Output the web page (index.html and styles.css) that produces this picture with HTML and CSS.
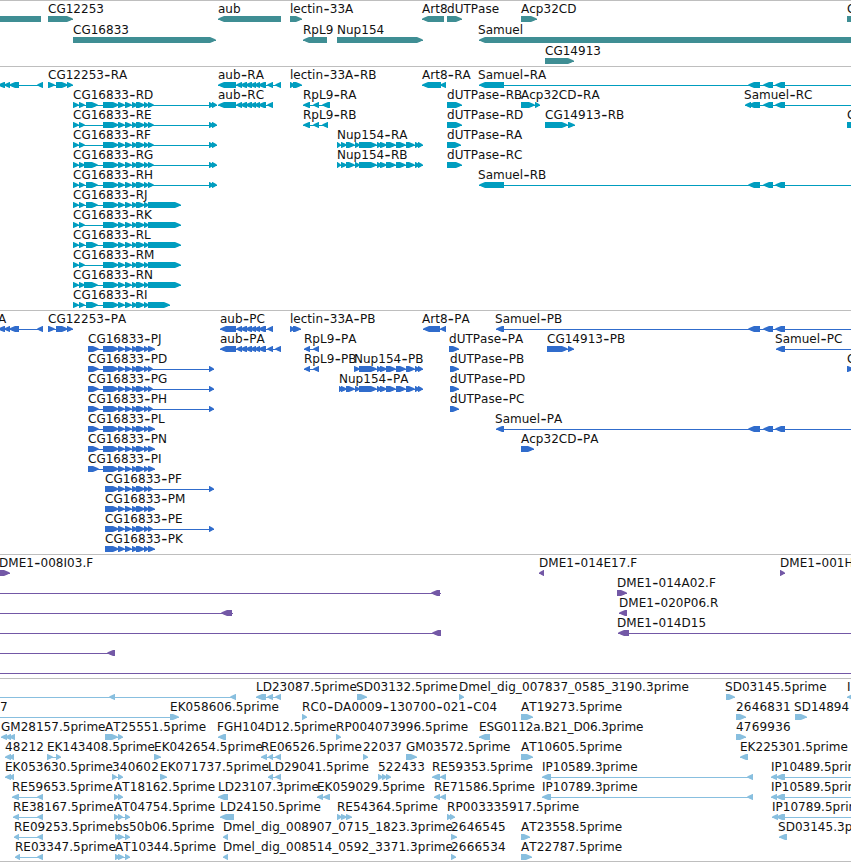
FILE: index.html
```html
<!DOCTYPE html>
<html lang="en">
<head>
<meta charset="utf-8">
<title>Genome tracks</title>
<link rel="stylesheet" href="styles.css">
</head>
<body>
<main class="browser"></main>
<script src="tracks.js"></script>
</body>
</html>
```
FILE: styles.css
```css
body {
  margin: 0;
  background: #fff;
  overflow: hidden;
}

.browser {
  display: flex;
  flex-direction: column;
  width: 851px;
  border-bottom: 1px solid #bebebe;
}

.track {
  border-top: 1px solid #bebebe;
}

.track svg {
  display: block;
  overflow: hidden;
}

.track text {
  font: 12px "DejaVu Sans", sans-serif;
  font-kerning: none;
  fill: #111;
}

.track .dash {
  font-size: 17px;
}

.gene { fill: #3f8e94; }
.transcript { fill: #009dbf; }
.protein { fill: #306ccc; }
.bac { fill: #7358a6; }
.est { fill: #88bfdf; }
```
FILE: tracks.js
```js
// Feature: [row, label, label x, direction, exons, line start, line end]
const core = "103-119 118-125 125-132 132-138 136-145 144-149 ";
const lead = "73-79 79-85 ";
const tail = core + "148-154 209-214 212-217";
const nup = "337-341 341-347 346-355 355-360 359-377 377-382 380-387 386-396 396-406 406-415 415-420 418-423";
const aub = "218-236 236-242 240-247 245-252 250-256 254-260 258-266 267-273";
const aubP = "220-236" + aub.slice(7);

const tracks = [
  { cls: "gene", height: 66, pitch: 21, items: [
    [0, "", 0, ">", "-20-41#"],
    [0, "CG12253", 48, ">", "48-73"],
    [0, "aub", 218, "<", "218-281"],
    [0, "lectin-33A", 290, ">", "290-302"],
    [0, "Art8", 422, "<", "422-444"],
    [0, "dUTPase", 447, ">", "447-462"],
    [0, "Acp32CD", 521, ">", "521-537"],
    [0, "C", 847, ">", "847-870"],
    [1, "CG16833", 73, ">", "73-216"],
    [1, "RpL9", 303, "<", "303-327"],
    [1, "Nup154", 337, ">", "337-423"],
    [1, "Samuel", 478, "<", "479-870"],
    [2, "CG14913", 545, ">", "545-574"]
  ]},
  { cls: "transcript", height: 244, pitch: 20, items: [
    [0, "", 0, "<", "-2-5 4-10 9-19 37-43"],
    [0, "CG12253-RA", 48, ">", "48-55 56-68 67-73"],
    [0, "aub-RA", 218, "<", aub + " 275-281"],
    [0, "lectin-33A-RB", 290, ">", "290-295 293-302"],
    [0, "Art8-RA", 422, "<", "422-441 440-446"],
    [0, "Samuel-RA", 478, "<", "479-504 748-760 763-773 775-785", 479, 851],
    [1, "CG16833-RD", 73, ">", lead + "86-98 " + tail],
    [1, "aub-RC", 218, "<", aub],
    [1, "RpL9-RA", 303, "<", "303-310 313-319 322-330"],
    [1, "dUTPase-RB", 447, ">", "447-462"],
    [1, "Acp32CD-RA", 521, ">", "521-535 535-540"],
    [1, "Samuel-RC", 744, "<", "745-751 748-760 763-773 775-785", 745, 851],
    [2, "CG16833-RE", 73, ">", lead + tail],
    [2, "RpL9-RB", 303, "<", "303-310 313-319 322-328"],
    [2, "dUTPase-RD", 447, ">", "447-462"],
    [2, "CG14913-RB", 545, ">", "545-568 568-575"],
    [2, "C", 847, ">", "847-870"],
    [3, "CG16833-RF", 73, ">", lead + tail],
    [3, "Nup154-RA", 337, ">", nup],
    [3, "dUTPase-RA", 447, ">", "447-461"],
    [4, "CG16833-RG", 73, ">", lead + "84-98 " + tail],
    [4, "Nup154-RB", 337, ">", nup],
    [4, "dUTPase-RC", 447, ">", "447-462"],
    [5, "CG16833-RH", 73, ">", lead + "86-98 " + tail],
    [5, "Samuel-RB", 478, "<", "479-504 748-760 763-773 775-785", 479, 851],
    [6, "CG16833-RJ", 73, ">", lead + "86-98 " + core + "148-181"],
    [7, "CG16833-RK", 73, ">", lead + core + "148-181"],
    [8, "CG16833-RL", 73, ">", lead + "86-98 " + core + "148-181"],
    [9, "CG16833-RM", 73, ">", lead + core + "148-181"],
    [10, "CG16833-RN", 73, ">", lead + "84-98 " + core + "148-181"],
    [11, "CG16833-RI", 73, ">", lead + "86-98 " + core + "148-170"]
  ]},
  { cls: "protein", height: 244, pitch: 20, items: [
    [0, "A", -2, "<", "-2-5 4-10 9-19 37-43"],
    [0, "CG12253-PA", 48, ">", "48-55 56-68 67-73"],
    [0, "aub-PC", 220, "<", aubP],
    [0, "lectin-33A-PB", 290, ">", "290-295 293-301"],
    [0, "Art8-PA", 422, "<", "423-440 440-446"],
    [0, "Samuel-PB", 495, "<", "496-504 748-760 763-773 775-785", 496, 851],
    [1, "CG16833-PJ", 88, ">", "88-99 " + core + "148-155"],
    [1, "aub-PA", 220, "<", aubP + " 275-281"],
    [1, "RpL9-PA", 304, "<", "304-310 313-319"],
    [1, "dUTPase-PA", 449, ">", "449-459"],
    [1, "CG14913-PB", 547, ">", "547-568 568-574"],
    [1, "Samuel-PC", 775, "<", "776-785", 776, 851],
    [2, "CG16833-PD", 88, ">", "88-99 " + core + "148-153 209-214"],
    [2, "RpL9-PB", 304, "<", "304-310 313-319"],
    [2, "Nup154-PB", 354, ">", "354" + nup.slice(nup.indexOf("355-360") + 3)],
    [2, "dUTPase-PB", 450, ">", "450-459"],
    [2, "C", 847, ">", "847-854"],
    [3, "CG16833-PG", 88, ">", "88-99 " + core + "148-153 209-214"],
    [3, "Nup154-PA", 339, ">", "339-343" + nup.slice(7)],
    [3, "dUTPase-PD", 450, ">", "450-459"],
    [4, "CG16833-PH", 88, ">", "88-99 " + core + "148-153 209-214"],
    [4, "dUTPase-PC", 450, ">", "450-459"],
    [5, "CG16833-PL", 88, ">", "88-99 " + core + "148-155"],
    [5, "Samuel-PA", 495, "<", "496-504 748-760 763-773 775-785", 496, 851],
    [6, "CG16833-PN", 88, ">", "88-99 " + core + "148-155"],
    [6, "Acp32CD-PA", 521, ">", "521-534"],
    [7, "CG16833-PI", 88, ">", "88-99 " + core + "148-155"],
    [8, "CG16833-PF", 105, ">", "105" + core.slice(3) + "148-153 209-214"],
    [9, "CG16833-PM", 105, ">", "105" + core.slice(3) + "148-155"],
    [10, "CG16833-PE", 105, ">", "105" + core.slice(3) + "148-153 209-214"],
    [11, "CG16833-PK", 105, ">", "105" + core.slice(3) + "148-155"]
  ]},
  { cls: "bac", height: 124, pitch: 20, items: [
    [0, "DME1-008I03.F", -1, ">", "-2-10"],
    [0, "DME1-014E17.F", 539, "<", "539-544"],
    [0, "DME1-001H", 780, ">", "780-785"],
    [1, "", 0, "<", "431-440", 0, 441],
    [1, "DME1-014A02.F", 617, ">", "617-627"],
    [2, "", 0, "<", "221-232", 0, 233],
    [2, "DME1-020P06.R", 619, "<", "619-627"],
    [3, "", 0, "<", "432-441", 0, 441],
    [3, "DME1-014D15", 617, "<", "618-629", 618, 851],
    [4, "", 0, "<", "107-115", 0, 115],
    [5, "", 0, "<", "", 0, 851]
  ]},
  { cls: "est", height: 183, pitch: 20, items: [
    [0, "", 0, "<", "109-115 230-236", 0, 236],
    [0, "LD23087.5prime", 256, "<", "256-266 267-273 275-281"],
    [0, "SD03132.5prime", 356, ">", "357-367"],
    [0, "Dmel_dig_007837_0585_3190.3prime", 459, ">", "459-464"],
    [0, "SD03145.5prime", 725, ">", "726-735"],
    [0, "I", 847, "<", "847-858"],
    [1, "7", 0, ">", "170-179", 0, 179],
    [1, "EK058606.5prime", 170, ">", ""],
    [1, "RC0-DA0009-130700-021-C04", 302, ">", "302-307"],
    [1, "AT19273.5prime", 521, ">", "521-533"],
    [1, "2646831", 736, ">", "736-746"],
    [1, "SD14894", 794, ">", "795-807"],
    [2, "GM28157.5prime", 1, "<", "1-7 5-11 9-15"],
    [2, "AT25551.5prime", 105, ">", "105-118 118-123"],
    [2, "FGH104D12.5prime", 217, "<", "218-226"],
    [2, "RP004073996.5prime", 336, ">", "336-341"],
    [2, "ESG0112a.B21_D06.3prime", 479, "<", "479-490"],
    [2, "4769936", 736, ">", "736-746"],
    [3, "48212", 5, "<", "5-11 9-14"],
    [3, "EK143408.5prime", 47, ">", "47-53 56-61"],
    [3, "EK042654.5prime", 154, ">", "154-161"],
    [3, "RE06526.5prime", 261, "<", "261-267 268-273 275-281"],
    [3, "22037", 363, ">", "363-368"],
    [3, "GM03572.5prime", 406, ">", "406-417"],
    [3, "AT10605.5prime", 521, ">", "521-533"],
    [3, "EK225301.5prime", 740, "<", "740-748"],
    [4, "EK053630.5prime", 5, "<", "5-11 9-14"],
    [4, "340602", 112, ">", "112-117 118-123"],
    [4, "EK071737.5prime", 160, ">", "160-167"],
    [4, "LD29041.5prime", 268, "<", "268-273 275-281"],
    [4, "522433", 378, ">", "378-383 382-387 386-391"],
    [4, "RE59353.5prime", 432, "<", "432-440 440-446"],
    [4, "IP10589.3prime", 542, "<", "542-551 747-753"],
    [4, "IP10489.5prime", 771, "<", "771-777 776-785", 771, 851],
    [5, "RE59653.5prime", 12, "<", "12-19 37-43"],
    [5, "AT18162.5prime", 114, ">", "114-119 118-123"],
    [5, "LD23107.3prime", 218, "<", "218-228"],
    [5, "EK059029.5prime", 317, "<", "317-323 323-330"],
    [5, "RE71586.5prime", 434, "<", "434-440 440-446"],
    [5, "IP10789.3prime", 542, "<", "542-551 747-753"],
    [5, "IP10589.5prime", 771, "<", "771-777 776-785", 771, 851],
    [6, "RE38167.5prime", 13, "<", "13-19 37-43"],
    [6, "AT04754.5prime", 114, ">", "114-119 118-123 125-130"],
    [6, "LD24150.5prime", 220, "<", "220-234"],
    [6, "RE54364.5prime", 337, ">", "337-342 341-347 346-352"],
    [6, "RP003335917.5prime", 447, ">", "447-452 450-455"],
    [6, "IP10789.5prime", 772, "<", "772-778 776-785", 772, 851],
    [7, "RE09253.5prime", 14, "<", "14-19 37-43"],
    [7, "bs50b06.5prime", 115, ">", "115-120 118-124 125-130"],
    [7, "Dmel_dig_008907_0715_1823.3prime", 223, "<", "223-228"],
    [7, "2646545", 451, ">", "451-457"],
    [7, "AT23558.5prime", 521, ">", "521-530"],
    [7, "SD03145.3prime", 778, "<", "779-787"],
    [8, "RE03347.5prime", 15, "<", "15-20 37-43"],
    [8, "AT10344.5prime", 115, ">", "115-120 118-124 125-130"],
    [8, "Dmel_dig_008514_0592_3371.3prime", 223, "<", "223-228"],
    [8, "2666534", 451, ">", "451-456"],
    [8, "AT22787.5prime", 521, ">", "521-532"]
  ]}
];

const NS = "http://www.w3.org/2000/svg";
function add(parent, name, attrs) {
  const el = document.createElementNS(NS, name);
  for (const key in attrs) el.setAttribute(key, attrs[key]);
  parent.appendChild(el);
  return el;
}

// Block with an arrow tip at its leading end
function exonPath(a, b, top, dir, blunt) {
  const bottom = top + 6, mid = top + 3;
  if (blunt) return `M${a} ${top}H${b}V${bottom}H${a}Z`;
  const tip = Math.min(6, b - a - 0.5), sign = dir === ">" ? 1 : -1;
  const head = dir === ">" ? b : a, back = dir === ">" ? a : b;
  const neck = head - sign * tip, curve = head - sign * tip * 0.4;
  return `M${back} ${top}H${neck}L${curve} ${mid - 1.5}L${head} ${mid - 0.3}V${mid + 0.3}L${curve} ${mid + 1.5}L${neck} ${bottom}H${back}Z`;
}

// Letter spacing per family of label
function spacing(label) {
  if (/^RC0/.test(label)) return 0.16;
  if (/^ESG/.test(label)) return -0.1;
  if (/^(AT|RP|bs|EK04|EK07|EK05860|Dmel)/.test(label)) return 0.08;
  if (/^\d{5,7}$/.test(label)) return 0.2;
  return 0.02;
}

function addLabel(svg, label, x, y) {
  const text = add(svg, "text", { x, y, "letter-spacing": spacing(label) });
  const pieces = label.split("-");
  pieces.forEach((piece, i) => {
    if (i) add(text, "tspan", { class: "dash", dx: 0.3, dy: 1 }).textContent = "-";
    add(text, "tspan", i ? { dx: 0.2, dy: -1 } : {}).textContent = piece;
  });
}

for (const track of tracks) {
  const section = document.createElement("section");
  section.className = "track";
  const svg = add(section, "svg", { width: 851, height: track.height - 1 });
  for (const [row, label, x, dir, exons, from, to] of track.items) {
    const top = 15 + row * track.pitch;
    const parts = (exons.match(/-?\d+-\d+#?/g) || []).map(s => {
      const m = s.match(/^(-?\d+)-(\d+)(#?)$/);
      return [+m[1], +m[2], m[3]];
    });
    const start = from !== undefined ? from : parts.length ? parts[0][0] : 0;
    const end = to !== undefined ? to : parts.length ? parts[parts.length - 1][1] : 0;
    if (end > start) add(svg, "rect", { class: track.cls, x: start, y: top + 3, width: end - start, height: 1 });
    for (const [a, b, blunt] of parts) add(svg, "path", { class: track.cls, d: exonPath(a, b, top, dir, blunt) });
    if (label) addLabel(svg, label, x, top - 3);
  }
  document.querySelector(".browser").appendChild(section);
}
```
